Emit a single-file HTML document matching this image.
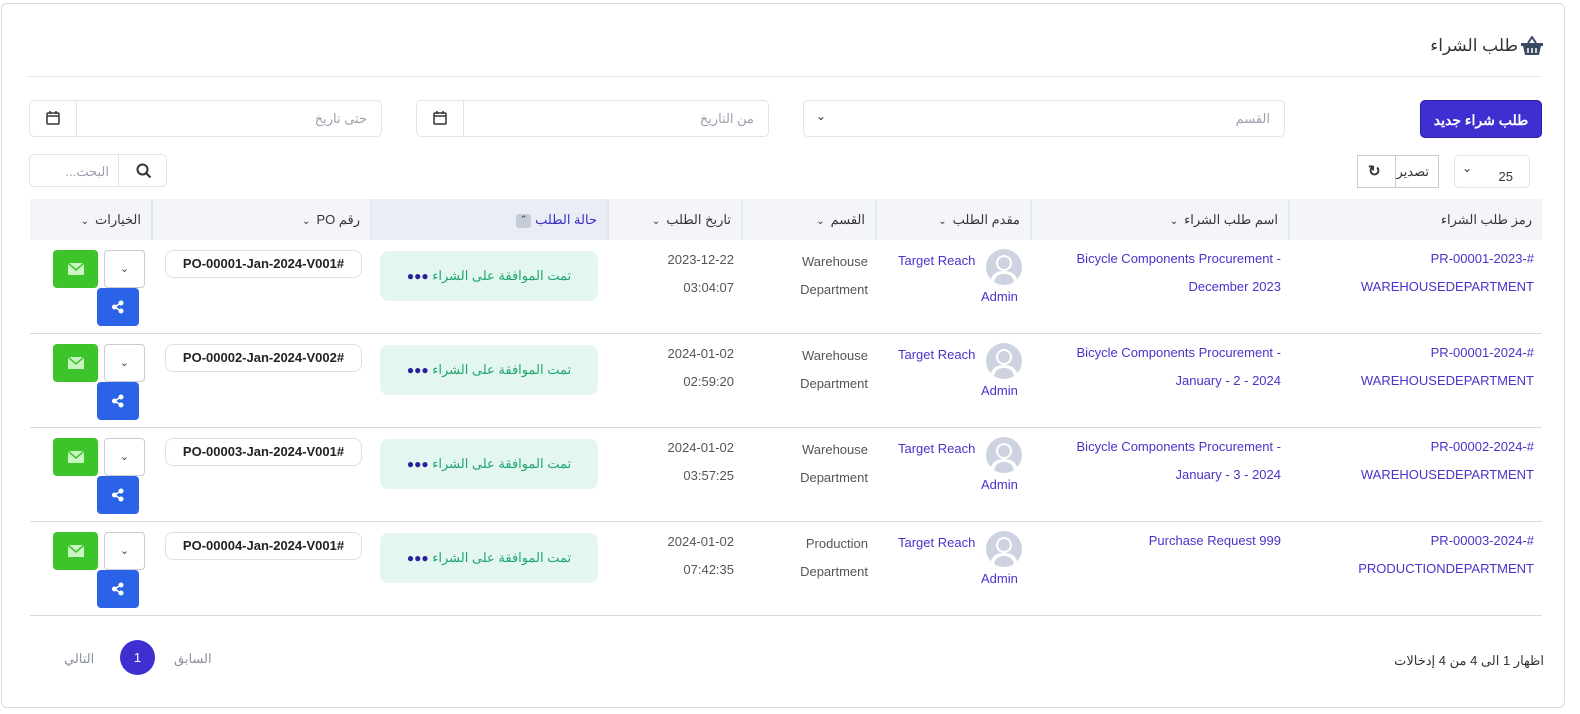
<!DOCTYPE html>
<html style="overflow:hidden"><head><meta charset="utf-8"><style>
*{box-sizing:border-box;margin:0;padding:0}
html,body{overflow:hidden}
body{width:1580px;height:714px;background:#fff;font-family:"Liberation Sans","Noto Sans CJK SC",sans-serif;position:relative;color:#333}
.a{position:absolute}
.card{left:1px;top:3px;width:1564px;height:705px;border:1px solid #d8dbe3;border-radius:6px}
.inp{border:1px solid #dfe3ea;border-radius:5px;background:#fff}
.ph{color:#9aa0ac;font-size:13px}
.th{top:199px;height:41px;background:#f3f5f9;border-right:2px solid #e3e7ee;font-size:13px;color:#333;text-align:right;padding:13px 10px 0 0;direction:rtl}
.row{left:30px;width:1512px;border-bottom:1px solid #d6d9df}
.lnk{color:#4a33c9;font-size:13px;line-height:28px}
.t{font-size:13px;line-height:28px;color:#555}
.chev{display:inline-block;font-size:10px;margin-right:6px}
.st{width:218px;height:50px;background:#e3f6f0;border-radius:8px;color:#1fa56e;font-size:13px;text-align:center;line-height:50px;direction:rtl}
.st b{color:#2a1f9c;letter-spacing:1px;font-size:12px}
.po{width:197px;height:28px;border:1px solid #dde0e6;border-radius:8px;font-size:13px;text-align:center;line-height:26px;color:#222;font-weight:bold}
.grn{width:45px;height:38px;background:#3cc42a;border-radius:4px}
.dd{width:41px;height:38px;border:1px solid #c9ccd6;border-radius:4px;text-align:center;line-height:36px;font-size:11px;color:#444}
.blu{width:42px;height:38px;background:#2a62e8;border-radius:4px}
.av{width:36px;height:36px;border-radius:50%;background:#cdd3e0;overflow:hidden}
</style></head><body>
<div class="a card"></div>
<div class="a" style="right:62px;top:36px;font-size:17px;color:#333;direction:rtl">طلب الشراء</div>
<svg class="a" style="left:1520px;top:36px" width="24" height="20" viewBox="0 0 24 20"><path d="M8 7 L12 1 L16 7" stroke="#3b4a63" stroke-width="2" fill="none"/><rect x="1" y="7" width="22" height="3" fill="#3b4a63"/><path d="M3 10h18l-2 9H5z" fill="#3b4a63"/><path d="M8 12v5M12 12v5M16 12v5" stroke="#fff" stroke-width="1.5"/></svg>
<div class="a" style="left:28px;top:76px;width:1514px;height:1px;background:#e6e8ee"></div>

<div class="a" style="left:1420px;top:100px;width:122px;height:38px;background:#3f2fd1;border-radius:5px;color:#fff;font-weight:bold;font-size:14px;text-align:center;line-height:38px;border:1px solid #2e21a8">طلب شراء جديد</div>
<div class="a inp" style="left:803px;top:100px;width:482px;height:37px"><span class="a ph" style="right:14px;top:10px">القسم</span><span class="a" style="left:12px;top:8px;font-size:12px">&#8964;</span></div>
<div class="a inp" style="left:416px;top:100px;width:353px;height:37px"><div class="a" style="left:46px;top:0;width:1px;height:35px;background:#dfe3ea"></div><span class="a ph" style="right:14px;top:10px">من التاريخ</span>
<svg class="a" style="left:16px;top:10px" width="14" height="14" viewBox="0 0 14 14"><rect x="1" y="2" width="12" height="11" rx="1" fill="none" stroke="#333" stroke-width="1.5"/><path d="M1 5h12M4 0v3M10 0v3" stroke="#333" stroke-width="1.5"/></svg></div>
<div class="a inp" style="left:29px;top:100px;width:353px;height:37px"><div class="a" style="left:46px;top:0;width:1px;height:35px;background:#dfe3ea"></div><span class="a ph" style="right:14px;top:10px">حتى تاريخ</span>
<svg class="a" style="left:16px;top:10px" width="14" height="14" viewBox="0 0 14 14"><rect x="1" y="2" width="12" height="11" rx="1" fill="none" stroke="#333" stroke-width="1.5"/><path d="M1 5h12M4 0v3M10 0v3" stroke="#333" stroke-width="1.5"/></svg></div>

<div class="a inp" style="left:1454px;top:155px;width:76px;height:33px"><span class="a" style="left:7px;top:5px;font-size:12px">&#8964;</span><span class="a" style="right:16px;top:13px;font-size:13px">25</span></div>
<div class="a" style="left:1357px;top:155px;width:82px;height:33px;border:1px solid #c8ccd4"><div class="a" style="left:37px;top:0;width:1px;height:31px;background:#c8ccd4"></div><span class="a" style="right:9px;top:8px;font-size:13px">تصدير</span><span class="a" style="left:10px;top:6px;font-size:15px;font-weight:bold">&#8635;</span></div>
<div class="a inp" style="left:29px;top:154px;width:138px;height:33px"><div class="a" style="left:88px;top:0;width:1px;height:31px;background:#dfe3ea"></div><span class="a ph" style="right:57px;top:9px;direction:rtl">البحث...</span>
<svg class="a" style="left:106px;top:8px" width="16" height="16" viewBox="0 0 16 16"><circle cx="6.5" cy="6.5" r="5" fill="none" stroke="#333" stroke-width="2"/><path d="M10 10l4.5 4.5" stroke="#333" stroke-width="2"/></svg></div>

<div class="a th" style="left:1290px;width:252px;border-right:none">رمز طلب الشراء</div>
<div class="a th" style="left:1032px;width:258px">اسم طلب الشراء<span class="chev">&#8964;</span></div>
<div class="a th" style="left:877px;width:155px">مقدم الطلب<span class="chev">&#8964;</span></div>
<div class="a th" style="left:743px;width:134px">القسم<span class="chev">&#8964;</span></div>
<div class="a th" style="left:609px;width:134px">تاريخ الطلب<span class="chev">&#8964;</span></div>
<div class="a th" style="left:372px;width:237px;background:#e9edf4;color:#3a2cc4">حالة الطلب<span style="display:inline-block;width:15px;height:14px;background:#c5ccd8;border-radius:3px;margin-right:4px;vertical-align:middle;font-size:9px;text-align:center;color:#333">&#8963;</span></div>
<div class="a th" style="left:153px;width:219px">رقم PO<span class="chev">&#8964;</span></div>
<div class="a th" style="left:30px;width:123px">الخيارات<span class="chev">&#8964;</span></div>

<div id="rows"></div>
<script>
var d=[["PR-00001-2023-#","WAREHOUSEDEPARTMENT","Bicycle Components Procurement -","December 2023","Warehouse","2023-12-22","03:04:07","PO-00001-Jan-2024-V001#"],
["PR-00001-2024-#","WAREHOUSEDEPARTMENT","Bicycle Components Procurement -","January - 2 - 2024","Warehouse","2024-01-02","02:59:20","PO-00002-Jan-2024-V002#"],
["PR-00002-2024-#","WAREHOUSEDEPARTMENT","Bicycle Components Procurement -","January - 3 - 2024","Warehouse","2024-01-02","03:57:25","PO-00003-Jan-2024-V001#"],
["PR-00003-2024-#","PRODUCTIONDEPARTMENT","Purchase Request 999","","Production","2024-01-02","07:42:35","PO-00004-Jan-2024-V001#"]];
var h="";
d.forEach(function(r,i){var y=240+i*94;
h+='<div class="a row" style="top:'+y+'px;height:94px"></div>';
h+='<div class="a lnk" style="right:46px;top:'+(y+5)+'px;text-align:right">'+r[0]+'<br>'+r[1]+'</div>';
h+='<div class="a lnk" style="right:299px;top:'+(y+5)+'px;text-align:right">'+r[2]+'<br>'+r[3]+'</div>';
h+='<div class="a av" style="left:986px;top:'+(y+9)+'px"><svg width="36" height="36"><circle cx="18" cy="14" r="8" fill="#fff"/><path d="M4 36c0-10 6-14 14-14s14 4 14 14z" fill="#fff"/><circle cx="18" cy="14" r="6" fill="#cdd3e0"/><path d="M8 36c0-8 4-11 10-11s10 3 10 11z" fill="#cdd3e0"/></svg></div>';
h+='<div class="a lnk" style="left:898px;top:'+(y+7)+'px">Target Reach</div><div class="a lnk" style="left:981px;top:'+(y+43)+'px">Admin</div>';
h+='<div class="a t" style="right:712px;top:'+(y+8)+'px;text-align:right">'+r[4]+'<br>Department</div>';
h+='<div class="a t" style="right:846px;top:'+(y+6)+'px;text-align:right">'+r[5]+'<br>'+r[6]+'</div>';
h+='<div class="a st" style="left:380px;top:'+(y+11)+'px">تمت الموافقة على الشراء <b>&#9679;&#9679;&#9679;</b></div>';
h+='<div class="a po" style="left:165px;top:'+(y+10)+'px">'+r[7]+'</div>';
h+='<div class="a grn" style="left:53px;top:'+(y+10)+'px"><svg style="position:absolute;left:15px;top:13px" width="16" height="12"><rect width="16" height="12" fill="#c8f5c0"/><path d="M0 0l8 7 8-7" stroke="#3cc42a" fill="none" stroke-width="1.5"/></svg></div>';
h+='<div class="a dd" style="left:104px;top:'+(y+10)+'px">&#8964;</div>';
h+='<div class="a blu" style="left:97px;top:'+(y+48)+'px"><svg style="position:absolute;left:14px;top:12px" width="14" height="14"><circle cx="10" cy="3" r="2.5" fill="#fff"/><circle cx="10" cy="11" r="2.5" fill="#fff"/><circle cx="3.5" cy="7" r="2.5" fill="#fff"/><path d="M10 3L3.5 7 10 11" stroke="#fff" stroke-width="1.5" fill="none"/></svg></div>';
});
document.getElementById("rows").innerHTML=h;
</script>

<div class="a" style="right:36px;top:653px;font-size:13px;color:#333;direction:rtl">اظهار 1 الى 4 من 4 إدخالات</div>
<div class="a" style="left:174px;top:651px;font-size:13px;color:#8a90a0">السابق</div>
<div class="a" style="left:120px;top:640px;width:35px;height:35px;border-radius:50%;background:#3f2fd1;color:#fff;font-size:13px;text-align:center;line-height:35px">1</div>
<div class="a" style="left:64px;top:651px;font-size:13px;color:#8a90a0">التالي</div>
</body></html>
